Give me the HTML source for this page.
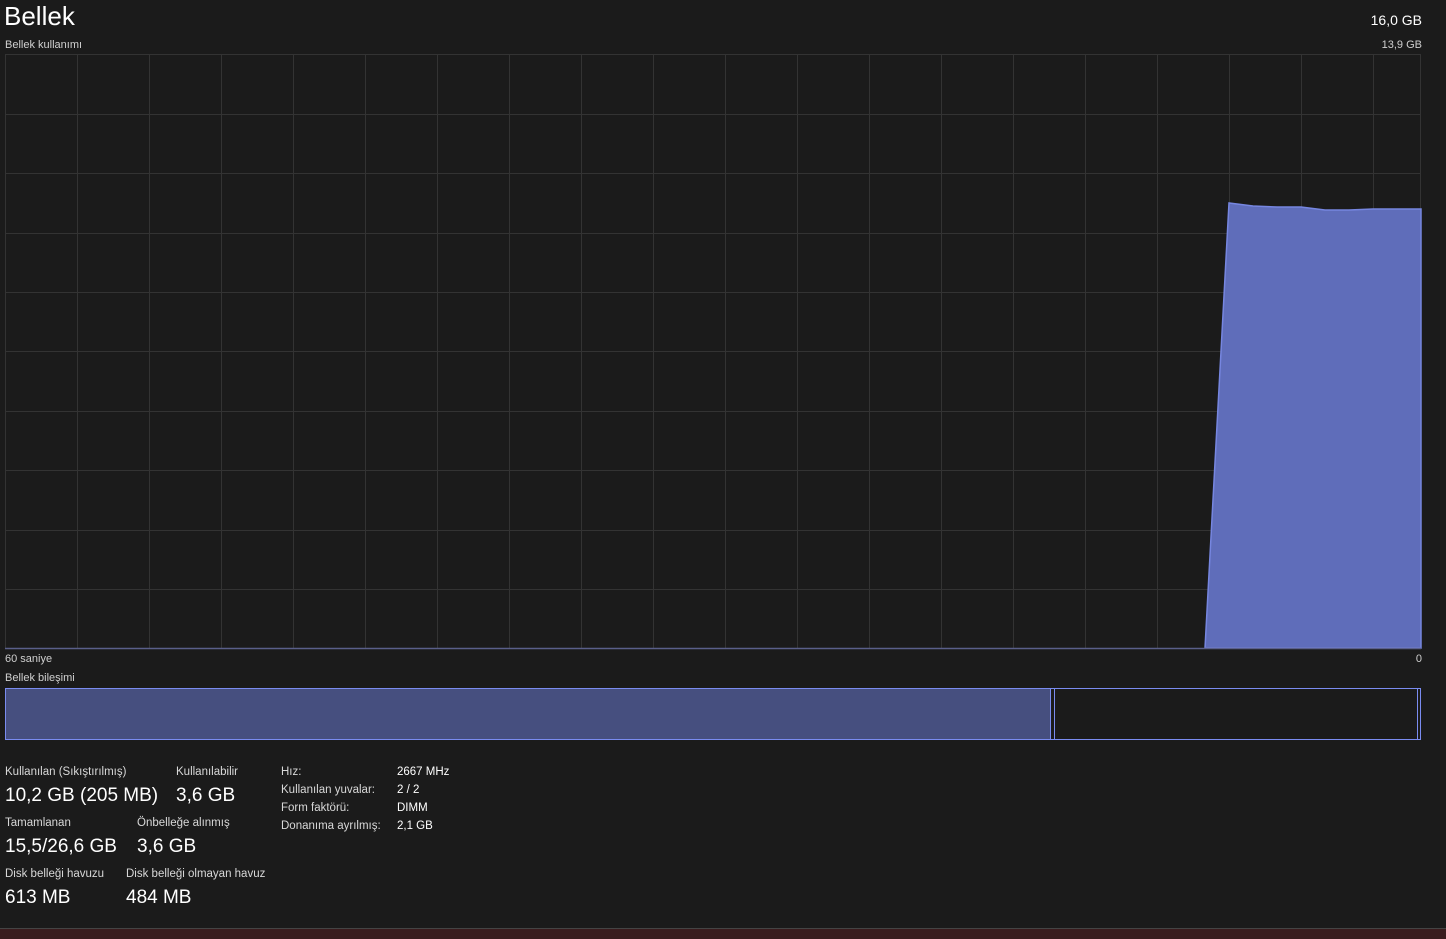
<!DOCTYPE html>
<html><head><meta charset="utf-8"><style>
body{margin:0;width:1446px;height:939px;background:#1b1b1b;overflow:hidden;position:relative;font-family:"Segoe UI","Liberation Sans",sans-serif;color:#fff}
.a{position:absolute;white-space:nowrap}
.s{font-size:11px;color:#d0d0d0}
.b{font-size:19px;color:#fff}
.l{font-size:11.5px;color:#d8d8d8}
</style></head><body>
<div class="a" style="left:4px;top:1px;font-size:26px">Bellek</div>
<div class="a" style="right:24px;top:12px;font-size:14px">16,0 GB</div>
<div class="a s" style="left:5px;top:39px">Bellek kullanımı</div>
<div class="a s" style="right:24px;top:39px">13,9 GB</div>
<svg class="a" style="left:0;top:0" width="1446" height="939">
<g stroke="#333" stroke-width="1">
<path d="M5.5 54V648M77.5 54V648M149.5 54V648M221.5 54V648M293.5 54V648M365.5 54V648M437.5 54V648M509.5 54V648M581.5 54V648M653.5 54V648M725.5 54V648M797.5 54V648M869.5 54V648M941.5 54V648M1013.5 54V648M1085.5 54V648M1157.5 54V648M1229.5 54V648M1301.5 54V648M1373.5 54V648M1420.5 54V648"/>
<path d="M5 54.5H1421M5 114.5H1421M5 173.5H1421M5 233.5H1421M5 292.5H1421M5 351.5H1421M5 411.5H1421M5 470.5H1421M5 530.5H1421M5 589.5H1421"/>
</g>
<polygon points="1205,648 1229,203 1253,206 1277,207 1301,207 1325,210 1349,210 1373,209 1421,209 1421,648" fill="#5f6dba" stroke="#7686e0" stroke-width="1.5"/>
<path d="M5 648.5H1421" stroke="#5a5f8a" stroke-width="1.5"/>
<rect x="5.5" y="688.5" width="1415" height="51" fill="none" stroke="#7a8cf0"/>
<rect x="6" y="689" width="1044" height="50" fill="#464f7f"/>
<path d="M1050.5 689V740M1054.5 689V740M1417.5 689V740" stroke="#7a8cf0"/>
<rect x="0" y="928" width="1446" height="11" fill="#3a1c1e"/>
<path d="M0 928.5H1446" stroke="#444"/>
</svg>
<div class="a s" style="left:5px;top:653px">60 saniye</div>
<div class="a s" style="right:24px;top:653px">0</div>
<div class="a s" style="left:5px;top:672px">Bellek bileşimi</div>
<div class="a l" style="left:5px;top:766px">Kullanılan (Sıkıştırılmış)</div>
<div class="a b" style="left:5px;top:785px">10,2 GB (205 MB)</div>
<div class="a l" style="left:176px;top:766px">Kullanılabilir</div>
<div class="a b" style="left:176px;top:785px">3,6 GB</div>
<div class="a l" style="left:5px;top:817px">Tamamlanan</div>
<div class="a b" style="left:5px;top:836px">15,5/26,6 GB</div>
<div class="a l" style="left:137px;top:817px">Önbelleğe alınmış</div>
<div class="a b" style="left:137px;top:836px">3,6 GB</div>
<div class="a l" style="left:5px;top:868px">Disk belleği havuzu</div>
<div class="a b" style="left:5px;top:887px">613 MB</div>
<div class="a l" style="left:126px;top:868px">Disk belleği olmayan havuz</div>
<div class="a b" style="left:126px;top:887px">484 MB</div>
<div class="a l" style="left:281px;top:766px">Hız:</div>
<div class="a l" style="left:281px;top:784px">Kullanılan yuvalar:</div>
<div class="a l" style="left:281px;top:802px">Form faktörü:</div>
<div class="a l" style="left:281px;top:820px">Donanıma ayrılmış:</div>
<div class="a l" style="left:397px;top:766px;color:#fff">2667 MHz</div>
<div class="a l" style="left:397px;top:784px;color:#fff">2 / 2</div>
<div class="a l" style="left:397px;top:802px;color:#fff">DIMM</div>
<div class="a l" style="left:397px;top:820px;color:#fff">2,1 GB</div>
</body></html>
